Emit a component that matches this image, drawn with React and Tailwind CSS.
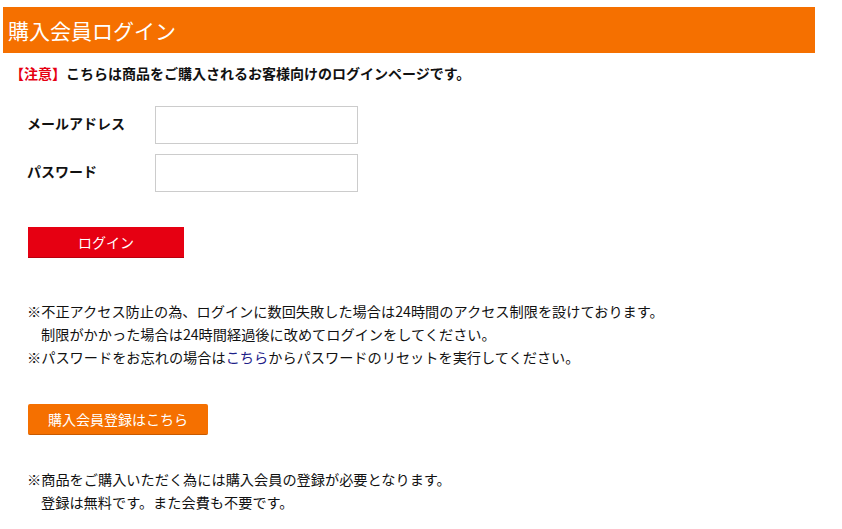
import React from "react";

function App() {
  return (
    <div className="min-h-[529px] bg-white pt-[7px] pl-[3px] font-['Noto_Sans_CJK_JP','Noto_Sans',sans-serif] text-[#111]">
      <div className="flex h-[46px] w-[812px] items-center bg-[#f57000] pl-[5px]">
        <h1 className="text-[21px] font-normal leading-none text-white">購入会員ログイン</h1>
      </div>

      <p className="mt-[10px] pl-[7px] text-[14px] font-bold leading-[20px]">
        <span className="text-[#e60012]">【注意】</span>
        こちらは商品をご購入されるお客様向けのログインページです。
      </p>

      <div className="mt-[23px] flex flex-col gap-[10px] pl-[24px]">
        <div className="flex items-center">
          <label className="w-[128px] pb-[4px] text-[14px] font-bold">メールアドレス</label>
          <input type="text" className="h-[38px] w-[203px] border border-[#ccc] bg-white outline-none" />
        </div>
        <div className="flex items-center">
          <label className="w-[128px] pb-[4px] text-[14px] font-bold">パスワード</label>
          <input type="password" className="h-[38px] w-[203px] border border-[#ccc] bg-white outline-none" />
        </div>
      </div>

      <button className="ml-[25px] mt-[35px] flex h-[31px] w-[156px] items-center justify-center border-b border-[#b8000e] bg-[#e60012] text-[14px] text-white">
        ログイン
      </button>

      <div className="mt-[42px] pl-[24px] text-[14.2px] leading-[23px]">
        <p>※不正アクセス防止の為、ログインに数回失敗した場合は24時間のアクセス制限を設けております。</p>
        <p className="pl-[14px]">制限がかかった場合は24時間経過後に改めてログインをしてください。</p>
        <p>
          ※パスワードをお忘れの場合は<a className="text-[#1d2088]">こちら</a>からパスワードのリセットを実行してください。
        </p>
      </div>

      <button className="ml-[25px] mt-[35px] flex h-[31px] w-[180px] items-center justify-center rounded-[2px] border-b border-[#c85a00] bg-[#f57000] text-[14px] text-white">
        購入会員登録はこちら
      </button>

      <div className="mt-[33px] pl-[24px] text-[14.2px] leading-[23px]">
        <p>※商品をご購入いただく為には購入会員の登録が必要となります。</p>
        <p className="pl-[14px]">登録は無料です。また会費も不要です。</p>
      </div>
    </div>
  );
}

export default App;
